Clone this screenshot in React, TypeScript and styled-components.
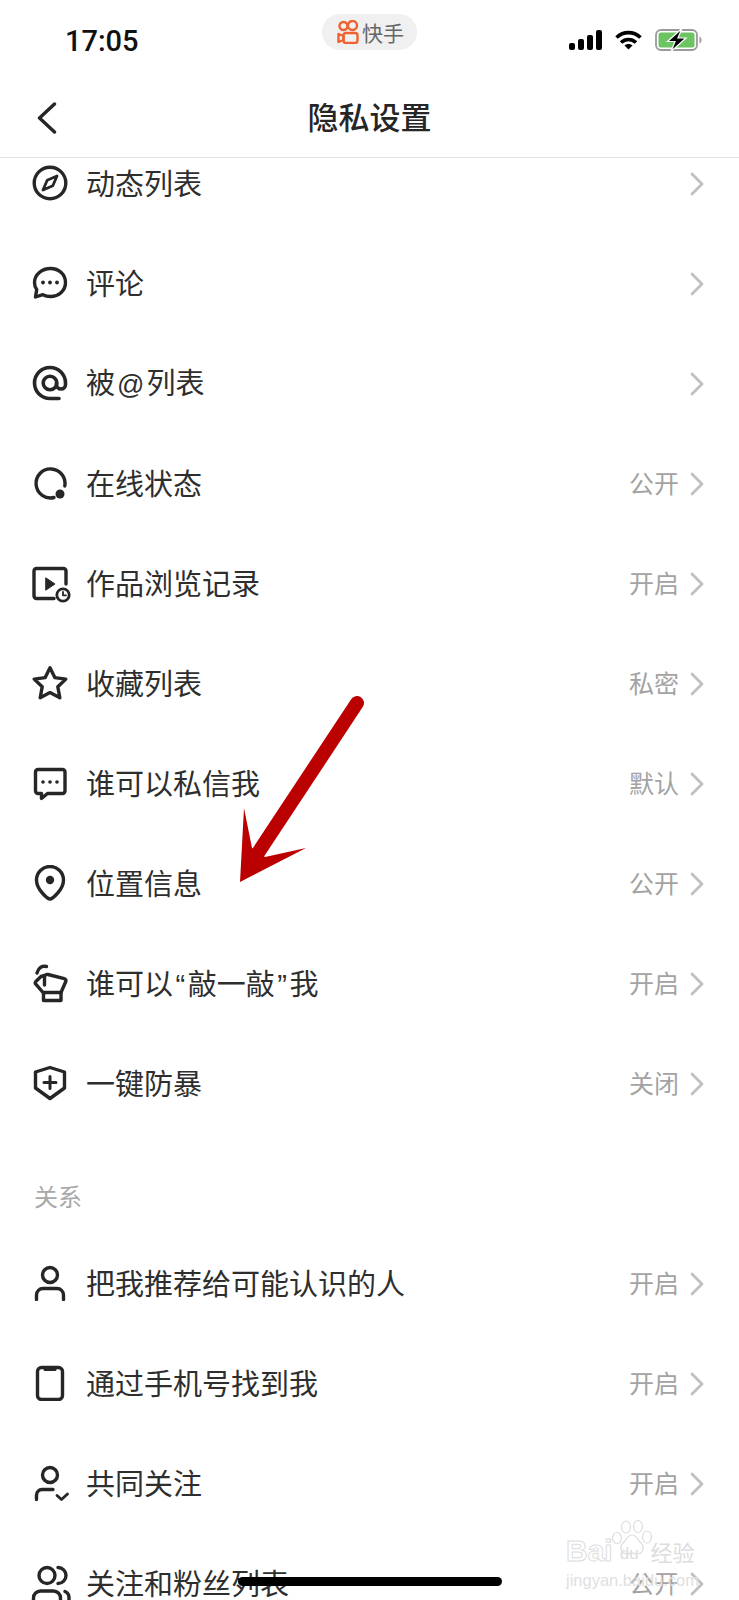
import styled, { createGlobalStyle } from 'styled-components';
import type { ReactNode } from 'react';

const GlobalStyle = createGlobalStyle`
    html, body {
        margin: 0;
        padding: 0;
        background: #fff;
    }
    * {
        box-sizing: border-box;
    }
`;

const ICON = '#262626';

const iconProps = {
    width: 36,
    height: 36,
    viewBox: '0 0 36 36',
    fill: 'none',
    stroke: ICON,
    strokeWidth: 3.4,
    strokeLinecap: 'round' as const,
    strokeLinejoin: 'round' as const,
};

const CompassIcon = () => (
    <svg {...iconProps}>
        <circle cx="18" cy="18" r="15.8" />
        <path d="M25 11l-4.2 9.8L11 25l4.2-9.8z" strokeWidth="2.8" />
    </svg>
);

const CommentIcon = () => (
    <svg {...iconProps}>
        <path d="M18.5 3.5c8.5 0 15 6 15 14s-6.500 14-15 14c-2.800 0-5.400-.6-7.600-1.800L3.500 32l1.200-7.400C3 22.300 2.500 20 2.500 17.500c0-8 7.500-14 16-14z" />
        <circle cx="11" cy="17.500" r="1.900" fill={ICON} stroke="none" />
        <circle cx="18" cy="17.500" r="1.900" fill={ICON} stroke="none" />
        <circle cx="25" cy="17.500" r="1.900" fill={ICON} stroke="none" />
    </svg>
);

const AtIcon = () => (
    <svg {...iconProps} strokeWidth={3.6}>
        <path d="M27 33.500h-9A15.500 15.500 0 1 1 33.500 18v1.500a4.500 4.500 0 0 1-9 0V18" />
        <circle cx="18" cy="18" r="6.800" />
    </svg>
);

const OnlineIcon = () => (
    <svg {...iconProps}>
        <path d="M22 32.500A14.500 14.500 0 1 1 32.800 21" />
        <circle cx="28" cy="29" r="4.500" fill={ICON} stroke="none" />
    </svg>
);

const HistoryIcon = () => (
    <svg {...iconProps} overflow="visible">
        <path d="M34 19V6a2.500 2.500 0 0 0-2.500-2.500h-27A2.500 2.500 0 0 0 2 6v25a2.500 2.500 0 0 0 2.500 2.500H22" />
        <path d="M14 13l9 6-9 6z" fill={ICON} stroke={ICON} strokeWidth="1" />
        <circle cx="31" cy="30" r="6.200" strokeWidth="2.800" />
        <path d="M31 27v3.300h3" strokeWidth="1.800" />
    </svg>
);

const StarIcon = () => (
    <svg {...iconProps}>
        <path d="M18 2.800l4.800 9.800 11 1.500-8 7.700 2 11L18 27.600 8.200 32.800l2-11-8-7.700 11-1.500z" />
    </svg>
);

const MessageIcon = () => (
    <svg {...iconProps}>
        <path d="M6 4.500h24.500a2.500 2.500 0 0 1 2.500 2.500v19a2.500 2.500 0 0 1-2.500 2.500H15.500L9.500 33.500V28.500H6A2.500 2.500 0 0 1 3.500 26V7A2.500 2.500 0 0 1 6 4.500z" />
        <circle cx="11" cy="17" r="1.800" fill={ICON} stroke="none" />
        <circle cx="18" cy="17" r="1.800" fill={ICON} stroke="none" />
        <circle cx="25" cy="17" r="1.800" fill={ICON} stroke="none" />
    </svg>
);

const PinIcon = () => (
    <svg {...iconProps}>
        <path d="M18 34c-2 0-13.500-9-13.500-19a13.500 13.500 0 0 1 27 0c0 10-11.500 19-13.500 19z" />
        <circle cx="18" cy="15" r="4.200" fill={ICON} stroke="none" />
    </svg>
);

const FistIcon = () => (
    <svg {...iconProps} overflow="visible">
        <path d="M5 8C6.500 2.500 10.500 0.500 14.500 1.500" />
        <path d="M12.500 10.500L9 11.500 3.800 16.500c-.7.800-.7 1.800 0 2.600L11 27.500h18l4.800-11c.5-1.200-.1-2.500-1.500-2.800L16 9.500c-2-.4-3.500.8-3.500 3V20" />
        <path d="M11.500 27.500v8h17.500v-8" />
    </svg>
);

const ShieldIcon = () => (
    <svg {...iconProps}>
        <path d="M18 2.500l14.500 4.500v16L18 33.500 3.500 23V7z" />
        <path d="M18 11.500v12M12 17.500h12" strokeWidth="3" />
    </svg>
);

const PersonIcon = () => (
    <svg {...iconProps}>
        <circle cx="18" cy="10" r="7.500" />
        <path d="M4.500 34.500V30a6.500 6.500 0 0 1 6.500-6.500h14a6.500 6.500 0 0 1 6.500 6.500v4.500" />
    </svg>
);

const PhoneIcon = () => (
    <svg {...iconProps}>
        <rect x="5.500" y="2.500" width="25" height="32" rx="4" />
        <path d="M11.500 3h13v1.500a1.500 1.500 0 0 1-1.500 1.500H13a1.500 1.500 0 0 1-1.500-1.500z" fill={ICON} stroke="none" />
    </svg>
);

const PersonCheckIcon = () => (
    <svg {...iconProps} overflow="visible">
        <circle cx="18" cy="10" r="7.500" />
        <path d="M4.500 34.500V30a5.500 5.500 0 0 1 5.500-5.500h11" />
        <path d="M25 30.500l4.500 4 6-5.500" strokeWidth="2.800" />
    </svg>
);

const PeopleIcon = () => (
    <svg {...iconProps} overflow="visible">
        <circle cx="15" cy="10.500" r="8" />
        <path d="M26 2.500a8 8 0 0 1 0 16" />
        <path d="M1.500 37v-4a7 7 0 0 1 7-7h13a7 7 0 0 1 7 7v4" />
        <path d="M33 26.500c2.500 1 4 3.500 4 6V37" />
    </svg>
);

const Chevron = () => (
    <svg width="14" height="24" viewBox="0 0 14 24" fill="none" stroke="#bfbfbf" strokeWidth="2.800" strokeLinecap="round" strokeLinejoin="round">
        <path d="M2 2l10 10L2 22" />
    </svg>
);

const KuaishouLogo = () => (
    <svg width="22" height="24" viewBox="0 0 22 24" fill="none" stroke="#ee6130" strokeWidth="2.400">
        <circle cx="6.500" cy="6" r="4" />
        <circle cx="15.500" cy="5.500" r="4.500" />
        <rect x="6.500" y="13" width="14" height="10" rx="2.500" />
        <path d="M6.500 16L1.500 14v8l5-2z" strokeLinejoin="round" />
    </svg>
);

const SignalIcon = () => (
    <svg width="33" height="20" viewBox="0 0 33 20" fill="#000">
        <rect x="0" y="13" width="6" height="7" rx="2" />
        <rect x="9" y="9" width="6" height="11" rx="2" />
        <rect x="18" y="5" width="6" height="15" rx="2" />
        <rect x="27" y="0" width="6" height="20" rx="2" />
    </svg>
);

const WifiIcon = () => (
    <svg width="27" height="20" viewBox="0 0 27 20" fill="none" stroke="#000" strokeWidth="3.600">
        <path d="M1.500 7.500c7-6.500 17-6.500 24 0" />
        <path d="M6 12.500c4.500-4 10.500-4 15 0" />
        <path d="M13.500 19.500l-4-4c2.300-2 5.700-2 8 0z" fill="#000" stroke="none" />
    </svg>
);

const BatteryIcon = () => (
    <svg width="47" height="24" viewBox="0 0 47 24" fill="none">
        <rect x="1" y="2" width="41" height="20" rx="5" stroke="#9a9a9a" strokeWidth="1.800" />
        <rect x="3.500" y="4.500" width="36" height="15" rx="2.500" fill="#6cc463" />
        <path d="M44.500 8.500c1.300.5 2 2 2 3.500s-.7 3-2 3.500z" fill="#9a9a9a" />
        <path d="M27 0.500L12.500 13.500H20L16 23.500 31 10H23z" fill="#000" stroke="#fff" strokeWidth="1.200" />
    </svg>
);

const BackIcon = () => (
    <svg width="20" height="32" viewBox="0 0 20 32" fill="none" stroke="#262626" strokeWidth="3.400" strokeLinecap="round" strokeLinejoin="round">
        <path d="M17.500 2L2.500 16l15 14" />
    </svg>
);

const PawIcon = () => (
    <svg width="40" height="36" viewBox="0 0 40 36" fill="none" stroke="#dddddd" strokeWidth="1.200">
        <ellipse cx="5" cy="18" rx="4.500" ry="5.500" />
        <ellipse cx="14" cy="7" rx="4.500" ry="6" />
        <ellipse cx="26" cy="6.500" rx="4.500" ry="6" />
        <ellipse cx="35" cy="17" rx="4.500" ry="6" />
        <path d="M20 15c5 0 5.500 5 9 8 4 3.500 2 11-4 11-2 0-3.500-1-5-1s-3 1-5 1c-6 0-8-7.500-4-11 3.500-3 4-8 9-8z" />
    </svg>
);

const AtSign = styled.span`
    margin: 0 2px;
    font-size: 27px;
`;

const Quote = styled.span`
    margin: 0 2.500px;
`;

interface RowData {
    id: string;
    icon: ReactNode;
    label: ReactNode;
    value?: string;
}

const privacyRows: RowData[] = [
    { id: 'feed', icon: <CompassIcon />, label: '动态列表' },
    { id: 'comment', icon: <CommentIcon />, label: '评论' },
    { id: 'at', icon: <AtIcon />, label: <>被<AtSign>@</AtSign>列表</> },
    { id: 'online', icon: <OnlineIcon />, label: '在线状态', value: '公开' },
    { id: 'history', icon: <HistoryIcon />, label: '作品浏览记录', value: '开启' },
    { id: 'favorite', icon: <StarIcon />, label: '收藏列表', value: '私密' },
    { id: 'message', icon: <MessageIcon />, label: '谁可以私信我', value: '默认' },
    { id: 'location', icon: <PinIcon />, label: '位置信息', value: '公开' },
    { id: 'knock', icon: <FistIcon />, label: <>谁可以<Quote>“</Quote>敲一敲<Quote>”</Quote>我</>, value: '开启' },
    { id: 'guard', icon: <ShieldIcon />, label: '一键防暴', value: '关闭' },
];

const relationRows: RowData[] = [
    { id: 'recommend', icon: <PersonIcon />, label: '把我推荐给可能认识的人', value: '开启' },
    { id: 'phone', icon: <PhoneIcon />, label: '通过手机号找到我', value: '开启' },
    { id: 'mutual', icon: <PersonCheckIcon />, label: '共同关注', value: '开启' },
    { id: 'follow', icon: <PeopleIcon />, label: '关注和粉丝列表', value: '公开' },
];

const SettingRow = ({ icon, label, value }: RowData) => (
    <Row>
        <IconSlot>{icon}</IconSlot>
        <RowLabel>{label}</RowLabel>
        <RowEnd>
            {value && <RowValue>{value}</RowValue>}
            <Chevron />
        </RowEnd>
    </Row>
);

const App = () => (
    <Page>
        <GlobalStyle />
        <StatusBar>
            <Time>17:05</Time>
            <AppPill>
                <KuaishouLogo />
                <PillText>快手</PillText>
            </AppPill>
            <StatusIcons>
                <SignalIcon />
                <WifiIcon />
                <BatteryIcon />
            </StatusIcons>
        </StatusBar>
        <NavBar>
            <BackSlot>
                <BackIcon />
            </BackSlot>
            <Title>隐私设置</Title>
        </NavBar>
        <Scroller>
            <ScrollContent>
                {privacyRows.map((row) => (
                    <SettingRow key={row.id} {...row} />
                ))}
                <SectionLabel>关系</SectionLabel>
                {relationRows.map((row) => (
                    <SettingRow key={row.id} {...row} />
                ))}
            </ScrollContent>
        </Scroller>
        <Arrow width="130" height="190" viewBox="0 0 130 190">
            <path d="M120 10L21 160" stroke="#bb0000" strokeWidth="14" strokeLinecap="round" fill="none" />
            <path d="M3 189L7 115 15 155 28 164 69 155z" fill="#bb0000" />
        </Arrow>
        <Watermark>
            <PawSlot>
                <PawIcon />
            </PawSlot>
            <WatermarkBrand>
                <BaiText>Bai</BaiText>
                <DuText>du</DuText>
                <JingYan>经验</JingYan>
            </WatermarkBrand>
            <WatermarkUrl>jingyan.baidu.com</WatermarkUrl>
        </Watermark>
        <HomeBar />
    </Page>
);

const Page = styled.div`
    position: relative;
    width: 739px;
    height: 1600px;
    overflow: hidden;
    background: #fff;
    font-family: 'Liberation Sans', 'Noto Sans CJK SC', sans-serif;
    color: #262626;
`;

const StatusBar = styled.div`
    display: grid;
    grid-template-columns: 1fr auto 1fr;
    align-items: start;
    height: 80px;
    padding: 14px 39px 0;
`;

const Time = styled.div`
    margin: 10px 0 0 26px;
    font-family: Roboto, sans-serif;
    font-size: 29px;
    line-height: 34px;
    font-weight: 500;
    color: #111;
`;

const AppPill = styled.div`
    display: flex;
    align-items: center;
    gap: 3px;
    width: 95px;
    height: 36px;
    padding-left: 15px;
    border-radius: 18px;
    background: #f0f0f0;
`;

const PillText = styled.span`
    font-family: 'Noto Sans CJK SC', sans-serif;
    font-size: 21px;
    line-height: 24px;
    color: #666;
`;

const StatusIcons = styled.div`
    display: flex;
    justify-content: flex-end;
    align-items: center;
    gap: 13px;
    margin: 14px -2px 0 0;
`;

const NavBar = styled.div`
    position: relative;
    display: flex;
    justify-content: center;
    align-items: center;
    height: 78px;
    border-bottom: 1px solid #e2e2e2;
`;

const BackSlot = styled.div`
    position: absolute;
    left: 37px;
    top: 22px;
    line-height: 0;
`;

const Title = styled.h1`
    margin: 0 0 5px;
    font-family: 'Noto Sans CJK SC', sans-serif;
    font-size: 31px;
    line-height: 40px;
    font-weight: 500;
    color: #262626;
`;

const Scroller = styled.div`
    height: 1442px;
    overflow: hidden;
`;

const ScrollContent = styled.div`
    margin-top: -25px;
`;

const Row = styled.div`
    display: flex;
    align-items: center;
    height: 100px;
    padding: 0 35px 0 32px;
`;

const IconSlot = styled.div`
    flex: 0 0 36px;
    height: 36px;
    margin-right: 18px;
    line-height: 0;
`;

const RowLabel = styled.div`
    flex: 1;
    padding-top: 3px;
    font-size: 29px;
    line-height: 40px;
    font-weight: 400;
    color: #2e2e2e;
`;

const RowEnd = styled.div`
    display: flex;
    align-items: center;
    gap: 11px;
    padding-top: 2px;
`;

const RowValue = styled.span`
    font-size: 25px;
    line-height: 32px;
    color: #a3a3a3;
`;

const SectionLabel = styled.div`
    height: 100px;
    padding: 47px 0 0 34px;
    font-size: 24px;
    line-height: 36px;
    color: #a8a8a8;
`;

const Arrow = styled.svg`
    position: absolute;
    left: 237px;
    top: 693px;
    overflow: visible;
`;

const Watermark = styled.div`
    position: absolute;
    left: 566px;
    top: 1520px;
    width: 134px;
    color: #dddddd;
`;

const PawSlot = styled.div`
    position: absolute;
    left: 46px;
    top: 0;
    line-height: 0;
`;

const WatermarkBrand = styled.div`
    display: flex;
    align-items: center;
    height: 24px;
    margin-top: 19px;
`;

const BaiText = styled.span`
    font-family: 'Liberation Sans', sans-serif;
    font-size: 30px;
    font-weight: 700;
    line-height: 24px;
    color: #fff;
    -webkit-text-stroke: 1px #dddddd;
`;

const DuText = styled.span`
    position: relative;
    margin: 5px 0 0 7px;
    font-family: 'Liberation Sans', sans-serif;
    font-size: 17px;
    line-height: 24px;
`;

const JingYan = styled.span`
    margin-left: 12px;
    font-family: 'Noto Sans CJK SC', sans-serif;
    font-size: 22px;
    line-height: 24px;
`;

const WatermarkUrl = styled.div`
    margin-top: 9px;
    font-family: 'Liberation Sans', sans-serif;
    font-size: 16.500px;
    line-height: 16px;
    white-space: nowrap;
    color: #e0e0e0;
`;

const HomeBar = styled.div`
    position: absolute;
    left: 238px;
    top: 1577px;
    width: 264px;
    height: 9px;
    border-radius: 5px;
    background: #000;
`;

export default App;
